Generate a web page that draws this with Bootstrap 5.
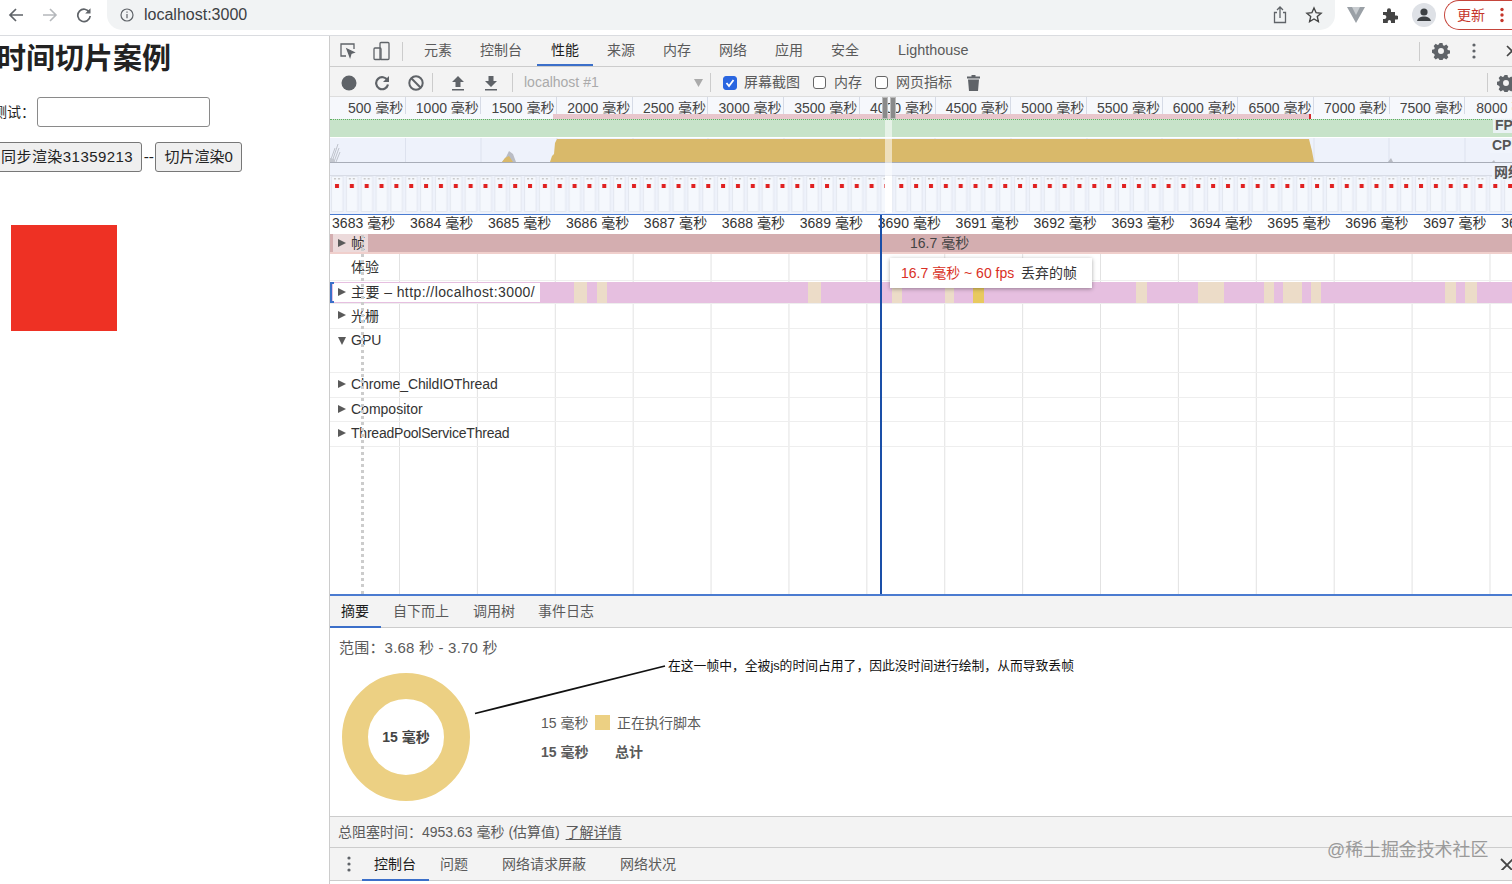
<!DOCTYPE html>
<html lang="zh">
<head>
<meta charset="utf-8">
<title>时间切片案例</title>
<link href="https://cdn.jsdelivr.net/npm/bootstrap@5.3.0/dist/css/bootstrap.min.css" rel="stylesheet">
<style>
html,body{height:884px;overflow:hidden;background:#fff}
body{font-family:"Liberation Sans","Noto Sans CJK SC",sans-serif;font-size:14px;color:#5a5a5a}
.shell{width:1512px;height:884px;overflow:hidden}
.topbar{height:36px;border-bottom:1px solid #dadce0;background:#fff;flex:none;padding-bottom:5px}
.nav-ico{width:34px;display:flex;justify-content:center;color:#5f6368}
.navs{width:108px;margin-left:-1px;flex:none}
.urlpill{width:1228px;height:30px;flex:none;background:#f1f3f4;border-radius:0 0 15px 15px;padding:0 4px 0 13px;color:#3c4043;font-size:16px}
.urltxt{margin-left:10px}
.ext{width:34px;flex:none;display:flex;justify-content:center}
.ext-first{margin-left:4px}
.update{width:72px;height:30px;margin-left:3px;border:1px solid #c5453b;border-right:0;border-radius:15px 0 0 15px;color:#c5362b;padding-left:12px;gap:15px;flex:none}
.main-split{height:848px}
.pagepane{width:329px;flex:none;overflow:hidden;color:#222;background:#fff}
.pagepane h1{font-size:29px;font-weight:700;margin:6px 0 0 -3px;line-height:34px;color:#222;white-space:nowrap}
.testline{margin:21px 0 0 -7px;height:30px}
.testinput{width:173px;height:30px;border:1px solid #8a8a8a;border-radius:3px;background:#fff;margin-left:2px}
.btnline{margin:15px 0 0 -8px;height:30px;white-space:nowrap}
.fakebtn{height:30px;border:1px solid #777;border-radius:3px;background:#efefef;color:#222;font-size:15px;padding:0 8px;line-height:28px}
.fakebtn-wide{letter-spacing:.45px;padding-right:8px}
.dashes{font-size:15.5px;padding:0 1.5px}
.redbox{width:106px;height:106px;background:#ee3124;margin:53px 0 0 11px}
.devpane{width:1183px;flex:none;border-left:1px solid #ccc;overflow:hidden;position:relative;background:#fff}
.tb1{height:31px;background:#f3f3f3;border-bottom:1px solid #ccc;flex:none;position:relative}
.tb2{height:30px;background:#f3f3f3;flex:none;border-bottom:1px solid #ddd;padding-top:2px}
.dt-tab{padding:0 14px;height:30px;line-height:29px;white-space:nowrap}
.dt-wide{padding-right:15px}
.dt-on{color:#1c1c1c;border-bottom:2px solid #3b6fc9}
.dt-lh{margin-left:11px;font-size:14.4px}
.vsep{width:1px;height:19px;background:#ccc;flex:none}
.ico{flex:none;display:block}
.inspect-group{gap:14px;padding-left:8px}
.sep-a{margin-left:10px;margin-right:3px}
.tab-start{margin-left:4px}
.gear-a{margin-left:12px}
.dots-a{margin-left:22px}
.x-a{margin-left:30px;margin-right:-4px}
.ml-7{margin-left:7px}.ml-8{margin-left:8px}.ml-11{margin-left:11px}.ml-12{margin-left:12px}.ml-13{margin-left:13px}.ml-14{margin-left:14px}.ml-15{margin-left:15px}.ml-17{margin-left:17px}.ml-18{margin-left:18px}.ml-19{margin-left:19px}
.gear-b{margin-left:9px;margin-right:-3px}
.chk{width:13px;height:13px;border:1px solid #666;border-radius:3px;flex:none;background:#fff}
.chk-on{width:14px;height:14px;background:#2a66e0;border-color:#2a66e0;color:#fff;display:flex;align-items:center;justify-content:center}
.mute{color:#aaa;width:170px;margin-left:11px}
.overview{height:117px;flex:none;position:relative;overflow:hidden;background:#eef2fb}
.ovruler{height:17px;background:#f6f8fc;display:flex;overflow:hidden;flex:none}
.ovcell{width:75.7px;height:24px;flex:none;text-align:right;padding-right:1.5px;line-height:22px;border-right:1px solid #d6dbe6;white-space:nowrap;color:#444}
.ovcell-last{text-align:left;padding-left:11px}
.pinkstrip{height:5px;background:#f6f8fc;position:relative}
.pinkfill{margin-left:223px;width:758px;height:5px;background:#e8c6cc;border-right:2px solid #d62c2c}
.greenrow{height:18px;background:#c7e3c9;border-top:1px dotted #5fae63}
.gaprow{height:1px;background:#fff}
.cpurow{height:25px;display:block}
.netrow{height:13px;border-bottom:1px solid #d8dce6;background:#eef2fb}
.filmrow{height:37px;display:block}
.ovtag{position:absolute;background:rgba(240,244,252,.85);color:#555;font-weight:700;padding-left:2px;line-height:15px;white-space:nowrap;width:30px}
.tag-fps{left:1163px;top:21px}
.tag-cpu{left:1160px;top:41px}
.tag-net{left:1162px;top:68px}
.selband{position:absolute;left:555px;width:7px;top:23px;bottom:1px;background:rgba(255,255,255,.55)}
.selband-film{position:absolute;left:555px;width:7px;top:79px;bottom:1px;background:#fff}
.handle{position:absolute;top:0;width:6px;height:22px;background:#8a8a8a;border:1px solid #bbb}
.handle-l{left:552px}
.handle-r{left:560px}
.flame{height:382px;flex:none;position:relative;overflow:hidden;border-bottom:2px solid #4a7bd0;border-top:1px solid #4a7bd0;background-color:#fff;background-image:linear-gradient(90deg,transparent 76.9px,#e2e2e2 76.9px);background-size:77.9px 100%;background-position:-7.9px 0}
.mruler{height:19px;display:flex;background:#fff;overflow:hidden}
.mcell{width:77.95px;flex:none;white-space:nowrap;line-height:17px;color:#333;padding-left:2px;letter-spacing:.05px}
.mcell:first-child{width:78px}
.frow{position:relative;border-bottom:1px solid #eee;color:#333}
.lab{position:absolute;left:21px;top:0;line-height:22px;white-space:nowrap}
.lab-down{top:1px}
.lab-exp{top:2px}
.lab-chrome{letter-spacing:-.1px}
.lab-thread{letter-spacing:-.22px}
.tri{position:absolute;left:8px;top:7px;width:0;height:0;border-top:4.5px solid transparent;border-bottom:4.5px solid transparent;border-left:8px solid #5a5a5a}
.tri-frame{top:5px}
.tri-main{top:7px}
.tri-down{top:8px;border-left:4.5px solid transparent;border-right:4.5px solid transparent;border-top:8px solid #5a5a5a;border-bottom:0}
.r-frames{height:20px;background:#d4aeb0;border-bottom:2px solid #f0cfcc}
.r-exp{height:27px}
.r-main{height:23px}
.r-gpu{height:44px}
.r-std{height:24.5px}
.r-rast{height:25px}
.lab-frames{background:rgba(255,255,255,.55);left:3px;padding:0 3px 0 18px;height:18px;line-height:18px}
.mainsvg{position:absolute;left:0;top:1px}
.lab-main{background:#fff;left:3px;top:2px;padding:0 0 0 18px;height:19px;line-height:19px;width:207px;letter-spacing:.42px}
.bracket{position:absolute;left:0;top:1px;width:4px;height:21px;border:2px solid #3b6fc9;border-right:0}
.frametxt{position:absolute;left:580px;top:0;line-height:18px;color:#444}
.tipbox{position:absolute;left:560px;top:43px;width:202px;height:30px;background:#fff;box-shadow:0 1px 4px rgba(0,0,0,.35);line-height:30px;padding-left:11px;color:#333;white-space:nowrap}
.tipred{color:#d93025;margin-right:3px}
.curline{position:absolute;left:550px;top:0;bottom:0;width:2px;background:#1a4fa8}
.dotline{position:absolute;left:31px;top:20px;bottom:0;border-left:3px dotted #ccc}
.subtabs{height:32px;background:#f3f3f3;border-bottom:1px solid #ccc;flex:none;padding-left:0}
.sub-tab{height:32px;line-height:31px;padding:0 12px;white-space:nowrap}
.sub-tab:first-child{padding-left:11px}
.sub-end{margin-left:-1px}
.sub-on{color:#1c1c1c;border-bottom:2px solid #3b6fc9}
.summary{height:188px;flex:none;position:relative;background:#fff;padding:9px 9px 0}
.rangeline{font-size:15px;letter-spacing:.2px}
.donutwrap{position:absolute;left:12px;top:45px;width:128px;height:128px}
.donutlabel{position:absolute;inset:0;display:flex;align-items:center;justify-content:center;font-weight:700;color:#444}
.legendgrid{position:absolute;left:211px;top:81px}
.legline{height:29px}
.legval{width:54px}
.legval-wide{width:74px}
.swatch{width:15px;height:15px;background:#ecd083;margin-right:7px;margin-top:-3px}
.annot{position:absolute;left:338px;top:30px;font-size:12.8px;color:#111;white-space:nowrap;line-height:16px}
.annotline{position:absolute;left:140px;top:30px}
.statusbar{height:32px;background:#f3f3f3;border-top:1px solid #ccc;border-bottom:1px solid #ccc;flex:none;padding-left:8px;line-height:30px}
.statusbar u{text-underline-offset:2px;margin-left:2px}
.drawer{height:33px;background:#f3f3f3;border-bottom:1px solid #ccc;flex:none;position:relative}
.draw-tab{height:33px;line-height:33px;white-space:nowrap}
.draw-on{padding:0 13px 0 12px;color:#1c1c1c;border-bottom:2px solid #3b6fc9;margin-left:11px}
.dr-b{margin-left:11px}
.dr-c{margin-left:34px}
.watermark{position:absolute;left:997px;top:801px;font-size:17.9px;line-height:26px;color:#9a9a9a;white-space:nowrap}
.endx{position:absolute;left:1170px;top:10px}
</style>
</head>
<body>
<div class="shell d-flex flex-column">
  <div class="topbar d-flex align-items-center">
    <div class="navs d-flex align-items-center">
      <span class="nav-ico"><svg width="16" height="16" viewBox="0 0 16 16" fill="none" stroke="#5f6368" stroke-width="1.7"><path d="M15 8H2M8 2 2 8l6 6"/></svg></span>
      <span class="nav-ico"><svg width="16" height="16" viewBox="0 0 16 16" fill="none" stroke="#b5b8bc" stroke-width="1.6"><path d="M1 8h13M8 2l6 6-6 6"/></svg></span>
      <span class="nav-ico"><svg width="16" height="16" viewBox="0 0 16 16" fill="none" stroke="#5f6368" stroke-width="1.7"><path d="M13.5 5.5A6.2 6.2 0 1 0 14.2 9"/><path d="M14.5 1.2v5.3H9.2z" fill="#5f6368" stroke="none"/></svg></span>
    </div>
    <div class="urlpill d-flex align-items-center">
      <svg class="ico" width="14" height="14" viewBox="0 0 14 14" fill="none" stroke="#5f6368" stroke-width="1.2"><circle cx="7" cy="7" r="6"/><path d="M7 6v4.2M7 3.4v1.4"/></svg>
      <span class="urltxt">localhost:3000</span>
      <span class="ms-auto d-flex align-items-center">
        <span class="ext"><svg width="14" height="18" viewBox="0 0 14 18" fill="none" stroke="#5f6368" stroke-width="1.3"><path d="M4 6.5H1.5V16.5h11V6.5H10M7 12V1.5M4 4l3-3 3 3"/></svg></span>
        <span class="ext"><svg width="18" height="18" viewBox="0 0 18 18" fill="none" stroke="#444" stroke-width="1.4"><path d="m9 2 2.1 4.7 5 .5-3.8 3.4 1.1 5L9 13l-4.4 2.6 1.1-5L1.9 7.2l5-.5z"/></svg></span>
      </span>
    </div>
    <span class="ext ext-first"><svg width="18" height="16" viewBox="0 0 18 16"><path d="M0 0h18L9 16z" fill="#9aa0a6"/><path d="M5 0h8L9 8z" fill="#c8ccd0"/></svg></span>
    <span class="ext"><svg width="16" height="16" viewBox="0 0 16 16" fill="#444"><path d="M1 5h4V3.2a2 2 0 0 1 4 0V5h4v3.5h1.5a2 2 0 0 1 0 4H13V16H9v-1.5a1.6 1.6 0 0 0-3.200 0V16H1v-4h1.400a2 2 0 0 0 0-4H1z"/></svg></span>
    <span class="ext"><svg width="24" height="24" viewBox="0 0 24 24"><circle cx="12" cy="12" r="12" fill="#dee1e6"/><circle cx="12" cy="9" r="3.6" fill="#3c4043"/><path d="M5 18c1-3.500 4-4.500 7-4.500s6 1 7 4.500z" fill="#3c4043"/></svg></span>
    <div class="update d-flex align-items-center"><span>更新</span><svg width="4" height="16" viewBox="0 0 4 16" fill="#c5362b"><circle cx="2" cy="2.500" r="1.700"/><circle cx="2" cy="8" r="1.700"/><circle cx="2" cy="13.500" r="1.700"/></svg></div>
  </div>

  <div class="main-split d-flex">
    <div class="pagepane">
      <h1>时间切片案例</h1>
      <div class="testline d-flex align-items-center"><span>测试：</span><span class="testinput"></span></div>
      <div class="btnline d-flex align-items-center"><span class="fakebtn fakebtn-wide">同步渲染31359213</span><span class="dashes">--</span><span class="fakebtn">切片渲染0</span></div>
      <div class="redbox"></div>
    </div>

    <div class="devpane d-flex flex-column">
      <div class="tb1 d-flex align-items-center">
        <span class="d-flex align-items-center inspect-group">
          <svg class="ico" width="20" height="18" viewBox="0 0 20 18" fill="none" stroke="#5f6368" stroke-width="1.300"><path d="M8 14H3V2h13v5"/><path d="M9 7l7 3.500-3 1-1 3.500z" fill="#5f6368"/></svg>
          <svg class="ico" width="20" height="20" viewBox="0 0 20 20" fill="none" stroke="#5f6368" stroke-width="1.300"><rect x="8" y="1.500" width="9" height="17" rx="1"/><rect x="2" y="7" width="7" height="11.500" rx="1"/></svg>
        </span>
        <span class="vsep sep-a"></span>
        <div class="dt-tab tab-start">元素</div><div class="dt-tab dt-wide">控制台</div><div class="dt-tab dt-on">性能</div><div class="dt-tab">来源</div><div class="dt-tab">内存</div><div class="dt-tab">网络</div><div class="dt-tab">应用</div><div class="dt-tab">安全</div><div class="dt-tab dt-lh">Lighthouse</div>
        <div class="ms-auto d-flex align-items-center">
          <span class="vsep"></span>
          <svg class="ico gear-a" width="18" height="18" viewBox="0 0 20 20" fill="#5f6368"><path fill-rule="evenodd" d="M8.300 1h3.400l.5 2.500 1.500.7 2.200-1.300 2.300 2.400-1.300 2.200.6 1.500 2.500.5v3.300l-2.500.6-.6 1.400 1.300 2.200-2.300 2.400-2.200-1.300-1.500.6-.5 2.500H8.300l-.5-2.500-1.500-.6-2.200 1.300-2.300-2.400 1.300-2.200-.6-1.400L0 11.900V8.600l2.500-.5.600-1.500-1.300-2.200 2.300-2.400 2.200 1.300 1.500-.7zM10 6.800a3.300 3.300 0 1 0 0 6.600 3.300 3.300 0 0 0 0-6.600z"/></svg>
          <svg class="ico dots-a" width="4" height="16" viewBox="0 0 4 16" fill="#5f6368"><circle cx="2" cy="2" r="1.600"/><circle cx="2" cy="8" r="1.600"/><circle cx="2" cy="14" r="1.600"/></svg>
          <svg class="ico x-a" width="10" height="12" viewBox="0 0 10 12" fill="none" stroke="#444" stroke-width="1.600"><path d="M1 1l10 10M11 1 1 11"/></svg>
        </div>
      </div>
      <div class="tb2 d-flex align-items-center">
        <svg class="ico ml-11" width="16" height="16" viewBox="0 0 16 16"><circle cx="8" cy="8" r="7.500" fill="#5f6368"/></svg>
        <svg class="ico ml-17" width="16" height="16" viewBox="0 0 16 16" fill="none" stroke="#5f6368" stroke-width="2.200"><path d="M13.500 5.500A6 6 0 1 0 14 9.500"/><path d="M15 1v6H9z" fill="#5f6368" stroke="none"/></svg>
        <svg class="ico ml-18" width="16" height="16" viewBox="0 0 16 16" fill="none" stroke="#5f6368" stroke-width="2"><circle cx="8" cy="8" r="6.700"/><path d="M3.300 3.300l9.400 9.400"/></svg>
        <span class="vsep ml-8"></span>
        <svg class="ico ml-18" width="14" height="16" viewBox="0 0 14 16" fill="#5f6368"><path d="M7 1l6 6H9.500v5h-5V7H1zM1 14h12v1.500H1z"/></svg>
        <svg class="ico ml-19" width="14" height="16" viewBox="0 0 14 16" fill="#5f6368"><path d="M4.500 1h5v5H13L7 12 1 6h3.500zM1 14h12v1.500H1z"/></svg>
        <span class="vsep ml-14"></span>
        <span class="mute">localhost #1</span>
        <svg class="ico" width="9" height="8" viewBox="0 0 9 8" fill="#aaa"><path d="M0 0h9L4.500 8z"/></svg>
        <span class="vsep ml-7"></span>
        <span class="chk chk-on ml-12"><svg width="10" height="10" viewBox="0 0 10 10" fill="none" stroke="#fff" stroke-width="1.800"><path d="M1.500 5l2.500 3 4.500-6"/></svg></span>
        <span class="ml-7">屏幕截图</span>
        <span class="chk ml-13"></span><span class="ml-8">内存</span>
        <span class="chk ml-13"></span><span class="ml-8">网页指标</span>
        <svg class="ico ml-15" width="13" height="16" viewBox="0 0 13 16" fill="#5f6368"><path d="M4.500 0h4v1.500H13v2H0v-2h4.500zM1 4.500h11L11 16H2z"/></svg>
        <span class="ms-auto d-flex align-items-center">
          <span class="vsep"></span>
          <svg class="ico gear-b" width="18" height="18" viewBox="0 0 20 20" fill="#5f6368"><path fill-rule="evenodd" d="M8.300 1h3.400l.5 2.500 1.500.7 2.200-1.300 2.300 2.400-1.300 2.200.6 1.500 2.500.5v3.300l-2.500.6-.6 1.400 1.300 2.200-2.300 2.400-2.200-1.300-1.500.6-.5 2.500H8.300l-.5-2.500-1.500-.6-2.200 1.300-2.300-2.400 1.300-2.200-.6-1.400L0 11.900V8.600l2.500-.5.600-1.500-1.300-2.200 2.300-2.400 2.200 1.300 1.500-.7zM10 6.800a3.300 3.300 0 1 0 0 6.600 3.300 3.300 0 0 0 0-6.600z"/></svg>
        </span>
      </div>

      <div class="overview d-flex flex-column">
        <div class="ovruler">
          <div class="ovcell">500 毫秒</div><div class="ovcell">1000 毫秒</div><div class="ovcell">1500 毫秒</div><div class="ovcell">2000 毫秒</div><div class="ovcell">2500 毫秒</div><div class="ovcell">3000 毫秒</div><div class="ovcell">3500 毫秒</div><div class="ovcell">4000 毫秒</div><div class="ovcell">4500 毫秒</div><div class="ovcell">5000 毫秒</div><div class="ovcell">5500 毫秒</div><div class="ovcell">6000 毫秒</div><div class="ovcell">6500 毫秒</div><div class="ovcell">7000 毫秒</div><div class="ovcell">7500 毫秒</div><div class="ovcell ovcell-last">8000 毫秒</div>
        </div>
        <div class="pinkstrip"><div class="pinkfill"></div></div>
        <div class="greenrow"></div>
        <div class="gaprow"></div>
        <svg class="cpurow" width="1182" height="25" viewBox="0 0 1182 25">
          <rect width="1182" height="25" fill="#eef2fb"/>
          <path d="M75.500 0v25M151 0v25M227 0v25M303 0v25M378 0v25M454 0v25M530 0v25M605 0v25M681 0v25M757 0v25M832 0v25M908 0v25M984 0v25M1059 0v25M1135 0v25" stroke="#dde2ee"/>
          <path d="M2 24l6-18M4 24l5-14M6 24l4-10M0 24l5-14" stroke="#bfc3cc" fill="none"/>
          <path d="M0 24v-4l4 1 1 3z" fill="#c4c8d0"/>
          <path d="M172 24l4-5 3-6 4 3 3 8z" fill="#b9bcc4"/>
          <path d="M172 24l3-4 4-2 2 3 2 3z" fill="#d9b96a"/>
          <path d="M220 24l2-6 2-2 1-11 2-4H979l3 12 2 11z" fill="#d9b96a"/>
          <path d="M1058 24l3-4 2 4zM1162 24l2-2 1 2z" fill="#b9bcc4"/>
          <path d="M0 24.500H1182" stroke="#a8adb8"/>
        </svg>
        <div class="netrow"></div>
        <svg class="filmrow" width="1182" height="37" viewBox="0 0 1182 37">
          <defs><pattern id="filmframe" x="1" y="0" width="14.850" height="37" patternUnits="userSpaceOnUse">
            <rect width="14.850" height="37" fill="#eef2fb"/>
            <rect x="0.500" y="0.500" width="11.500" height="35" fill="#f5f8fd" stroke="#e4e8f0"/>
            <rect x="3" y="2" width="2" height="1.500" fill="#c8c8c8"/><rect x="7" y="2" width="2" height="1.500" fill="#c8c8c8"/>
            <rect x="4" y="8" width="4" height="4" fill="#e02020"/>
          </pattern></defs>
          <rect width="1182" height="37" fill="url(#filmframe)"/>
        </svg>
        <div class="ovtag tag-fps">FPS</div>
        <div class="ovtag tag-cpu">CPU</div>
        <div class="ovtag tag-net">网络</div>
        <div class="selband"></div>
        <div class="selband-film"></div>
        <div class="handle handle-l"></div>
        <div class="handle handle-r"></div>
      </div>

      <div class="flame">
        <div class="mruler">
          <div class="mcell">3683 毫秒</div><div class="mcell">3684 毫秒</div><div class="mcell">3685 毫秒</div><div class="mcell">3686 毫秒</div><div class="mcell">3687 毫秒</div><div class="mcell">3688 毫秒</div><div class="mcell">3689 毫秒</div><div class="mcell">3690 毫秒</div><div class="mcell">3691 毫秒</div><div class="mcell">3692 毫秒</div><div class="mcell">3693 毫秒</div><div class="mcell">3694 毫秒</div><div class="mcell">3695 毫秒</div><div class="mcell">3696 毫秒</div><div class="mcell">3697 毫秒</div><div class="mcell">3698 毫秒</div>
        </div>
        <div class="frow r-frames"><span class="lab lab-frames">帧</span><span class="tri tri-frame"></span><span class="frametxt">16.7 毫秒</span></div>
        <div class="frow r-exp"><span class="lab lab-exp">体验</span></div>
        <div class="frow r-main">
          <svg class="mainsvg" width="1182" height="21" viewBox="0 0 1182 21">
            <rect width="1182" height="21" fill="#e6bfe0"/>
            <g fill="#ecdcc8"><rect x="244" width="13" height="21"/><rect x="267" width="10" height="21"/><rect x="478" width="13" height="21"/><rect x="562" width="10" height="21"/><rect x="615" width="9" height="21"/><rect x="806" width="11" height="21"/><rect x="868" width="26" height="21"/><rect x="934" width="10" height="21"/><rect x="953" width="19" height="21"/><rect x="981" width="10" height="21"/><rect x="1115" width="11" height="21"/><rect x="1135" width="12" height="21"/></g>
            <rect x="643" width="11" height="21" fill="#e8c95f"/>
          </svg>
          <span class="lab lab-main">主要 – http://localhost:3000/</span><span class="tri tri-main"></span><span class="bracket"></span>
        </div>
        <div class="frow r-rast"><span class="tri"></span><span class="lab lab-down">光栅</span></div>
        <div class="frow r-gpu"><span class="tri tri-down"></span><span class="lab">GPU</span></div>
        <div class="frow r-std"><span class="tri"></span><span class="lab lab-chrome">Chrome_ChildIOThread</span></div>
        <div class="frow r-std"><span class="tri"></span><span class="lab">Compositor</span></div>
        <div class="frow r-std"><span class="tri"></span><span class="lab lab-thread">ThreadPoolServiceThread</span></div>
        <div class="dotline"></div>
        <div class="curline"></div>
        <div class="tipbox"><span class="tipred">16.7 毫秒 ~ 60 fps</span> 丢弃的帧</div>
      </div>

      <div class="subtabs d-flex">
        <div class="sub-tab sub-on">摘要</div><div class="sub-tab">自下而上</div><div class="sub-tab">调用树</div><div class="sub-tab sub-end">事件日志</div>
      </div>
      <div class="summary">
        <div class="rangeline">范围：3.68 秒 - 3.70 秒</div>
        <div class="donutwrap">
          <svg width="128" height="128" viewBox="0 0 128 128"><circle cx="64" cy="64" r="51" fill="none" stroke="#ecd083" stroke-width="26"/></svg>
          <div class="donutlabel">15 毫秒</div>
        </div>
        <div class="legendgrid">
          <div class="legline d-flex align-items-center"><span class="legval">15 毫秒</span><span class="swatch"></span><span>正在执行脚本</span></div>
          <div class="legline d-flex align-items-center fw-bold"><span class="legval legval-wide">15 毫秒</span><span>总计</span></div>
        </div>
        <svg class="annotline" width="200" height="60" viewBox="0 0 200 60"><path d="M5 55.500 195 8" stroke="#111" stroke-width="1.800"/></svg>
        <div class="annot">在这一帧中，全被js的时间占用了，因此没时间进行绘制，从而导致丢帧</div>
      </div>
      <div class="statusbar">总阻塞时间：4953.63 毫秒 (估算值) <u>了解详情</u></div>
      <div class="drawer d-flex">
        <svg class="ico align-self-center ml-17" width="4" height="16" viewBox="0 0 4 16" fill="#5f6368"><circle cx="2" cy="2" r="1.600"/><circle cx="2" cy="8" r="1.600"/><circle cx="2" cy="14" r="1.600"/></svg>
        <div class="draw-tab draw-on">控制台</div>
        <div class="draw-tab dr-b">问题</div>
        <div class="draw-tab dr-c">网络请求屏蔽</div>
        <div class="draw-tab dr-c">网络状况</div>
        <svg class="endx" width="12" height="12" viewBox="0 0 12 12" fill="none" stroke="#444" stroke-width="1.800"><path d="M1 1l12 12M13 1 1 13"/></svg>
      </div>
      <div class="watermark">@稀土掘金技术社区</div>
    </div>
  </div>
</div>
<script src="https://cdn.jsdelivr.net/npm/bootstrap@5.3.0/dist/js/bootstrap.bundle.min.js"></script>
</body>
</html>
